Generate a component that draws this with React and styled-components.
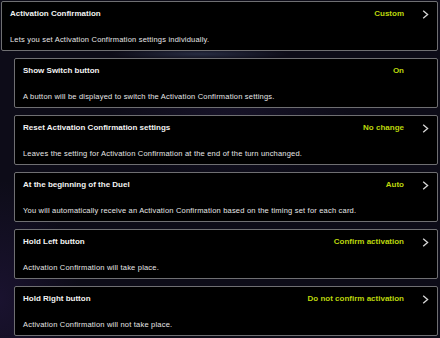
import React from "react";
import styled, { createGlobalStyle } from "styled-components";

const Global = createGlobalStyle`
  html, body { margin: 0; padding: 0; }
  body {
    width: 440px;
    height: 338px;
    overflow: hidden;
    background:
      radial-gradient(ellipse 90px 6px at 200px 54px, rgba(60,70,100,0.55), transparent 100%),
      radial-gradient(ellipse 120px 60px at 230px 120px, rgba(40,30,70,0.35), transparent 100%),
      radial-gradient(ellipse 80px 120px at 0px 300px, rgba(50,30,90,0.35), transparent 100%),
      #0d0c18;
    font-family: "Liberation Sans", Arial, sans-serif;
  }
`;

const Page = styled.div`
  display: flex;
  flex-direction: column;
  gap: 7px;
  padding: 1px 2px 0 1px;
`;

const Card = styled.div`
  box-sizing: border-box;
  height: 50px;
  margin-left: ${(p) => (p.$nested ? "13px" : "0")};
  background: #000;
  border: 1px solid #6f6f72;
  border-radius: 2px;
  padding: 7px 8px 5px 8px;
  display: flex;
  flex-direction: column;
  justify-content: space-between;
`;

const Header = styled.div`
  display: flex;
  align-items: center;
  height: 10px;
`;

const Title = styled.div`
  flex: 1;
  color: #f2f2f2;
  font-size: 8px;
  font-weight: 700;
  line-height: 10px;
  white-space: nowrap;
`;

const Value = styled.div`
  color: #bcd60c;
  font-size: 8px;
  font-weight: 700;
  line-height: 10px;
  white-space: nowrap;
`;

const ChevronSlot = styled.div`
  width: 25px;
  display: flex;
  justify-content: flex-end;
  align-items: center;
`;

const Desc = styled.div`
  color: #e6e6e6;
  font-size: 7.5px;
  letter-spacing: 0.2px;
  line-height: 10px;
  white-space: nowrap;
`;

const Chevron = () => (
  <svg width="7" height="9" viewBox="0 0 7 9">
    <path d="M1.2 0.8 L5.6 4.5 L1.2 8.2" fill="none" stroke="#d8d8d8" strokeWidth="1.3" />
  </svg>
);

const items = [
  { title: "Activation Confirmation", value: "Custom", arrow: true, desc: "Lets you set Activation Confirmation settings individually." },
  { nested: true, title: "Show Switch button", value: "On", arrow: false, desc: "A button will be displayed to switch the Activation Confirmation settings." },
  { nested: true, title: "Reset Activation Confirmation settings", value: "No change", arrow: true, desc: "Leaves the setting for Activation Confirmation at the end of the turn unchanged." },
  { nested: true, title: "At the beginning of the Duel", value: "Auto", arrow: true, desc: "You will automatically receive an Activation Confirmation based on the timing set for each card." },
  { nested: true, title: "Hold Left button", value: "Confirm activation", arrow: true, desc: "Activation Confirmation will take place." },
  { nested: true, title: "Hold Right button", value: "Do not confirm activation", arrow: true, desc: "Activation Confirmation will not take place." },
];

export default function App() {
  return (
    <>
      <Global />
      <Page>
        {items.map((it) => (
          <Card key={it.title} $nested={it.nested}>
            <Header>
              <Title>{it.title}</Title>
              <Value>{it.value}</Value>
              <ChevronSlot>{it.arrow && <Chevron />}</ChevronSlot>
            </Header>
            <Desc>{it.desc}</Desc>
          </Card>
        ))}
      </Page>
    </>
  );
}
